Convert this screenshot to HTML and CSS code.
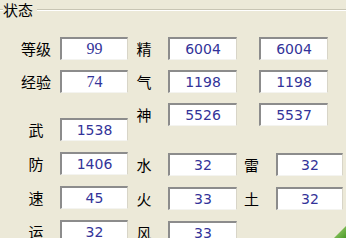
FILE: index.html
```html
<!DOCTYPE html>
<html lang="zh-CN">
<head>
    <meta charset="UTF-8">
    <title>状态</title>
    <link rel="stylesheet" href="styles.css">
</head>
<body>
    <div class="panel">
        <div class="legend">
            <span class="legend-line short"></span>
            <span class="legend-text">状态</span>
            <span class="legend-line"></span>
        </div>

        <div class="fields">
            <div class="col col-a">
                <div class="group">
                    <div class="row"><span class="label">等级</span><span class="box serif">99</span></div>
                    <div class="row"><span class="label">经验</span><span class="box serif">74</span></div>
                </div>
                <div class="group lower">
                    <div class="row"><span class="label">武</span><span class="box">1538</span></div>
                    <div class="row"><span class="label">防</span><span class="box">1406</span></div>
                    <div class="row"><span class="label">速</span><span class="box">45</span></div>
                    <div class="row"><span class="label">运</span><span class="box">32</span></div>
                </div>
            </div>

            <div class="col col-b">
                <div class="group">
                    <div class="row"><span class="label">精</span><span class="box">6004</span></div>
                    <div class="row"><span class="label">气</span><span class="box">1198</span></div>
                    <div class="row"><span class="label">神</span><span class="box">5526</span></div>
                </div>
                <div class="group lower">
                    <div class="row"><span class="label">水</span><span class="box">32</span></div>
                    <div class="row"><span class="label">火</span><span class="box">33</span></div>
                    <div class="row"><span class="label">风</span><span class="box">33</span></div>
                </div>
            </div>

            <div class="col col-c">
                <div class="group">
                    <div class="row"><span class="label"></span><span class="box">6004</span></div>
                    <div class="row"><span class="label"></span><span class="box">1198</span></div>
                    <div class="row"><span class="label"></span><span class="box">5537</span></div>
                </div>
                <div class="group lower">
                    <div class="row"><span class="label">雷</span><span class="box">32</span></div>
                    <div class="row"><span class="label">土</span><span class="box">32</span></div>
                </div>
            </div>
        </div>

        <svg class="grip" viewBox="0 0 14 14" width="14" height="14">
            <defs>
                <linearGradient id="g" x1="0" y1="0" x2="1" y2="1">
                    <stop offset="0" stop-color="#a8d878"></stop>
                    <stop offset="1" stop-color="#4c9a2a"></stop>
                </linearGradient>
            </defs>
            <polygon points="14,2 14,14 2,14" fill="url(#g)"></polygon>
        </svg>
    </div>
</body>
</html>
```

FILE: styles.css
```css
* {
    margin: 0;
    padding: 0;
    box-sizing: border-box;
}

body {
    background-color: #ece9d8;
    font-family: "Noto Sans CJK SC", "DejaVu Sans", sans-serif;
    color: #000;
    overflow: hidden;
}

.panel {
    position: relative;
    width: 346px;
    height: 238px;
    overflow: hidden;
}

.legend {
    display: flex;
    align-items: center;
    height: 20px;
}

.legend-line {
    flex: 1;
    height: 2px;
    border-top: 1px solid #c8c5b4;
    border-bottom: 1px solid #fff;
}

.legend-line.short {
    flex: 0 0 3px;
}

.legend-text {
    font-size: 15px;
    line-height: 20px;
    padding: 0 4px 0 0;
}

.fields {
    display: flex;
    padding-top: 17px;
}

.col {
    display: flex;
    flex-direction: column;
}

.group {
    display: flex;
    flex-direction: column;
    gap: 10px;
}

.group.lower {
    gap: 11px;
}

.col-a .group.lower {
    margin-top: 25px;
}

.col-b .group.lower,
.col-c .group.lower {
    margin-top: 27px;
}

.row {
    display: flex;
    align-items: center;
    height: 23px;
}

.label {
    font-size: 15px;
    line-height: 23px;
    text-align: center;
}

.box {
    display: block;
    height: 23px;
    width: 69px;
    background: #fff;
    border-style: solid;
    border-width: 2px 1px 1px 2px;
    border-color: #8c8c8c #d8d5c8 #f4f4f0 #8c8c8c;
    color: #333399;
    font-family: "DejaVu Sans", Verdana, sans-serif;
    font-size: 14px;
    line-height: 20px;
    text-align: center;
}

.box.serif {
    font-family: "Liberation Serif", "DejaVu Serif", serif;
    font-size: 16px;
}

.col-a .label {
    width: 60px;
    padding-left: 12px;
}

.col-a .box {
    width: 68px;
}

.col-b .label {
    width: 40px;
    padding-right: 8px;
}

.col-c .group .label {
    width: 22px;
}

.col-c .group.lower .label {
    width: 39px;
    padding-right: 10px;
}

.col-c .group.lower .box {
    width: 67px;
}

.grip {
    position: absolute;
    right: 0;
    bottom: 0;
}
```
